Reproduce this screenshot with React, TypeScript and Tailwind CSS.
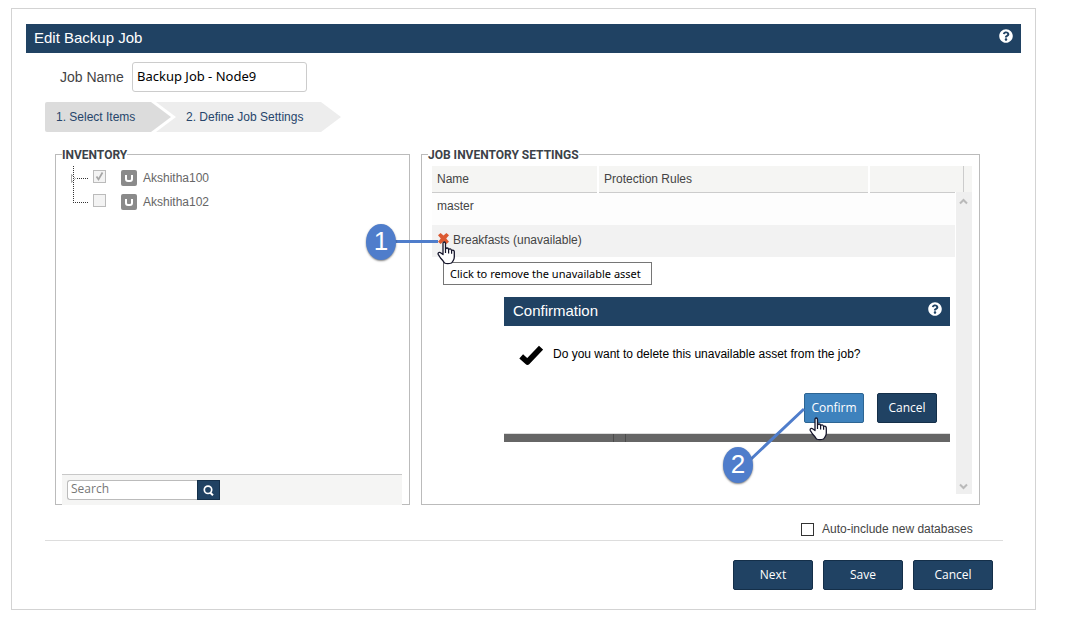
import type { ReactNode } from "react";
import { FaQuestionCircle } from "react-icons/fa";
import { clsx } from "clsx";

const servers = [
  { name: "Akshitha100", checked: true, expandable: true },
  { name: "Akshitha102", checked: false, expandable: false },
];

function TitleBar({ title, className }: { title: string; className?: string }) {
  return (
    <div
      className={clsx(
        "flex h-[29px] items-start justify-between bg-[#204263] pr-2 text-white",
        className
      )}
    >
      <h2 className="text-[15px] leading-[28px]">{title}</h2>
      <button type="button" aria-label="Help" className="mt-[5px]">
        <FaQuestionCircle className="size-[14px]" />
      </button>
    </div>
  );
}

function Button({
  children,
  className,
}: {
  children: ReactNode;
  className?: string;
}) {
  return (
    <button
      type="button"
      className={clsx(
        "h-[30px] rounded-[2px] border pb-px font-['Open_Sans',sans-serif] text-[12px] text-white",
        className
      )}
    >
      {children}
    </button>
  );
}

function Legend({ children }: { children: ReactNode }) {
  return (
    <legend className="pt-[2px] font-[Roboto,sans-serif] text-[12px] font-bold leading-[17px] text-[#3c4248]">
      {children}
    </legend>
  );
}

function TreeLines({ expandable }: { expandable: boolean }) {
  return (
    <svg width="20" height="24" viewBox="0 0 20 24" fill="none">
      {expandable && (
        <path d="M2.5 8.5L6.5 12.5L2.5 16.5Z" fill="#fff" stroke="#aaa" />
      )}
      <path
        d={expandable ? "M4.5 0V24" : "M4.5 0V12"}
        stroke="#333"
        strokeDasharray="1 1"
      />
      <path
        d={expandable ? "M8 12.5H20" : "M4 12.5H20"}
        stroke="#333"
        strokeDasharray="1 1"
      />
    </svg>
  );
}

function ServerIcon() {
  return (
    <svg width="16" height="16" viewBox="0 0 16 16" fill="none">
      <rect width="16" height="16" rx="2" fill="#8a8a8a" />
      <path
        d="M5 5V9Q5 11 7 11H9Q11 11 11 9V5"
        stroke="#fff"
        strokeWidth="2"
      />
    </svg>
  );
}

function HandCursor({ className }: { className: string }) {
  return (
    <svg
      width="19"
      height="24"
      viewBox="0 0 19 24"
      className={clsx("absolute", className)}
    >
      <path
        d="M6 13.5V2.5Q6 1 7.2 1T8.5 2.5V8Q9 6.9 10.2 7T11.6 8.6Q12.2 7.7 13.2 7.9T14.6 9.5Q15.4 8.8 16.4 9.3T17.3 11V16Q17.3 18.5 16 20Q15 21.5 14.5 22Q10.5 23.2 7.5 22Q6 19.5 3.5 17L1.2 13.3Q.8 12 1.8 11.5T4 12Z"
        fill="#fff"
        stroke="#14142a"
        strokeWidth="1.3"
        strokeLinejoin="round"
      />
      <path d="M8.5 8V12M11.6 8.8V12.4M14.6 9.7V12.8" stroke="#14142a" strokeWidth="1.2" />
    </svg>
  );
}

function Callout({ number, className }: { number: number; className: string }) {
  return (
    <div
      className={clsx(
        "absolute flex h-9 w-[30px] items-center justify-center rounded-[50%] bg-[#4f7dcb] pb-[2px] text-[26px] leading-none text-white shadow-[0_1px_2px_rgba(0,0,0,0.5)]",
        className
      )}
    >
      {number}
    </div>
  );
}

function Inventory() {
  return (
    <fieldset className="flex w-[355px] shrink-0 flex-col border border-[#bbb] pl-[6px] pr-[7px]">
      <Legend>INVENTORY</Legend>
      <ul className="flex-1 pl-[7px] pt-[2px]">
        {servers.map((server) => (
          <li key={server.name} className="flex h-6 items-start">
            <TreeLines expandable={server.expandable} />
            <label className="ml-1 flex text-[#666]">
              <span className="relative mt-1 size-[13px]">
                <input
                  type="checkbox"
                  disabled
                  defaultChecked={server.checked}
                  className="block size-[13px] appearance-none border border-[#bbb] bg-[#f3f3f3]"
                />
                {server.checked && (
                  <svg viewBox="0 0 13 13" className="absolute inset-0 size-[13px]" fill="none">
                    <path d="M3.5 6.5L5.5 9.5L9.5 2.5" stroke="#a5a5a5" strokeWidth="1.7" />
                  </svg>
                )}
              </span>
              <span className="ml-[15px] mt-1">
                <ServerIcon />
              </span>
              <span className="ml-[6px] leading-6">{server.name}</span>
            </label>
          </li>
        ))}
      </ul>
      <div className="-mb-px flex h-[31px] items-start border-t border-[#c8c8c8] bg-[#f5f5f4] pl-[5px] pt-[5px]">
        <input
          type="search"
          aria-label="Search"
          placeholder="Search"
          className="h-5 w-[130px] rounded-l-[3px] border border-r-0 border-[#bbb] bg-white px-[3px] pb-[3px] font-['Open_Sans',sans-serif] text-[12px] placeholder:text-[#777]"
        />
        <button
          type="button"
          aria-label="Run search"
          className="flex h-5 w-[23px] items-center justify-center border border-[#142f49] bg-[#204263]"
        >
          <svg width="11" height="11" viewBox="0 0 11 11" fill="none" stroke="#fff">
            <circle cx="5" cy="4.8" r="3.7" strokeWidth="1.7" />
            <path d="M7 7.5L10 10.3" strokeWidth="2" />
          </svg>
        </button>
      </div>
    </fieldset>
  );
}

function Confirmation() {
  return (
    <div
      role="dialog"
      aria-label="Confirmation"
      className="absolute left-[72px] right-[22px] top-[131px] bg-white"
    >
      <TitleBar title="Confirmation" className="pl-[9px]" />
      <div className="flex items-center pl-[15px] pt-[17px] text-black">
        <svg width="24" height="24" viewBox="0 0 24 24" fill="none">
          <path
            d="M2.2 13.4L8.4 19L22 4.7"
            stroke="currentColor"
            strokeWidth="5.6"
            strokeLinejoin="round"
          />
        </svg>
        <p className="ml-[10px] pb-[3px] text-[12px]">
          Do you want to delete this unavailable asset from the job?
        </p>
      </div>
      <div className="mt-[26px] flex justify-end gap-[13px] pb-[10px] pr-[13px]">
        <Button className="w-[60px] border-[#2d6593] bg-[#3e82bd]">Confirm</Button>
        <Button className="w-[60px] border-[#142f49] bg-[#204263]">Cancel</Button>
      </div>
      <div className="flex h-[9px] border-t border-[#ddd] bg-[#666]">
        <div className="ml-[109px] w-[13px] border-x border-[#4c4c4c]" />
      </div>
    </div>
  );
}

function JobInventorySettings() {
  return (
    <fieldset className="min-w-0 flex-1 border border-[#bbb] pb-[10px] pl-[6px] pr-[7px]">
      <Legend>JOB INVENTORY SETTINGS</Legend>
      <div className="relative ml-1 mt-[2px] h-[328px]">
        <table className="w-full table-fixed border-collapse text-left">
          <thead>
            <tr className="h-[26px] border-b border-[#ccc] bg-[#f5f5f3]">
              <th className="w-[166px] border-r-2 border-r-white pl-[5px] font-normal">Name</th>
              <th className="w-[271px] border-r-2 border-r-white pl-[5px] font-normal">
                Protection Rules
              </th>
              <th />
              <th className="w-[9px] border-l border-l-[#ccc]" />
            </tr>
          </thead>
          <tbody>
            <tr className="h-[33px] bg-[#fdfdfd]">
              <td className="pb-[6px] pl-[5px]">master</td>
              <td colSpan={3} />
            </tr>
            <tr className="h-8 bg-[#f2f2f2]">
              <td className="pb-[2px] pl-[6px]">
                <span className="flex items-center whitespace-nowrap">
                  <button type="button" aria-label="Remove unavailable asset" className="pb-1">
                    <svg width="11" height="11" viewBox="0 0 11 11">
                      <path
                        d="M0 2.2L2.6 0L5.5 2.6L8.4 0L11 2.2L8.2 5.5L11 8.8L8.4 11L5.5 8.4L2.6 11L0 8.8L2.8 5.5Z"
                        fill="#dc5a32"
                      />
                    </svg>
                  </button>
                  <span className="ml-1">Breakfasts (unavailable)</span>
                </span>
              </td>
              <td colSpan={3} />
            </tr>
          </tbody>
        </table>
        <div className="absolute bottom-0 right-0 top-[26px] flex w-[17px] flex-col items-center justify-between border-l border-white bg-[#efefef] pb-1 pr-px pt-[5px]">
          <svg width="9" height="8" viewBox="0 0 9 8" fill="none" stroke="#b9b9b9" strokeWidth="2">
            <path d="M1 6.5L4.5 3L8 6.5" />
          </svg>
          <svg width="9" height="8" viewBox="0 0 9 8" fill="none" stroke="#b9b9b9" strokeWidth="2">
            <path d="M1 2.5L4.5 6L8 2.5" />
          </svg>
        </div>
        <div
          role="tooltip"
          className="absolute left-[11px] top-[96px] h-[23px] w-[209px] whitespace-nowrap border border-[#767676] bg-white px-[6px] font-['Noto_Sans',sans-serif] text-[11px] leading-[21px] text-black"
        >
          Click to remove the unavailable asset
        </div>
        <Confirmation />
        <svg
          className="pointer-events-none absolute left-0 top-0 size-full overflow-visible"
          stroke="#4f7dcb"
          strokeWidth="3"
        >
          <path d="M-37 75.5H6M318 294L372 243" />
        </svg>
        <Callout number={1} className="left-[-66px] top-[58px]" />
        <Callout number={2} className="left-[291px] top-[281px]" />
        <HandCursor className="left-[5px] top-[75px]" />
        <HandCursor className="left-[377px] top-[251px]" />
      </div>
    </fieldset>
  );
}

export default function App() {
  return (
    <div className="pb-[26px] pl-[11px] pr-[33px] pt-2 font-['Liberation_Sans',Arial,sans-serif] text-[12px] text-[#444]">
      <form className="border border-[#d3d3d3] bg-white px-[14px] pb-[19px] pt-[15px]">
        <TitleBar title="Edit Backup Job" className="pl-2" />

        <div className="mt-[9px] flex items-center pl-[34px]">
          <label htmlFor="job-name" className="w-[72px] text-[14px]">
            Job Name
          </label>
          <input
            id="job-name"
            defaultValue="Backup Job - Node9"
            className="h-[30px] w-[175px] rounded-[3px] border border-[#ccc] px-1 pb-[3px] font-['Noto_Sans',sans-serif] text-[13px] text-black"
          />
        </div>

        <nav className="ml-[19px] mt-[10px] flex text-[#27456b]">
          <a
            href="#items"
            className="w-[126px] rounded-l-[2px] bg-[#dcdcdc] pl-[11px] leading-[30px] [clip-path:polygon(0_0,106px_0,100%_50%,106px_100%,0_100%)]"
          >
            1. Select Items
          </a>
          <a
            href="#settings"
            className="-ml-[15px] w-[185px] bg-[#ededed] pl-[30px] leading-[30px] [clip-path:polygon(0_0,165px_0,100%_50%,165px_100%,0_100%,20px_50%)]"
          >
            2. Define Job Settings
          </a>
        </nav>

        <div className="ml-[29px] mr-[41px] mt-[13px] flex gap-[11px]">
          <Inventory />
          <JobInventorySettings />
        </div>

        <div className="ml-[19px] mr-[18px] mt-[15px] flex justify-end border-b border-[#ddd] pb-[2px] pr-[25px]">
          <label className="flex items-center leading-[18px]">
            <input
              type="checkbox"
              className="mr-2 size-[13px] appearance-none border border-[#333] bg-white"
            />
            <span className="w-[156px]">Auto-include new databases</span>
          </label>
        </div>

        <div className="mr-7 mt-[19px] flex justify-end gap-[10px]">
          <Button className="w-20 border-[#142f49] bg-[#204263]">Next</Button>
          <Button className="w-20 border-[#142f49] bg-[#204263]">Save</Button>
          <Button className="w-20 border-[#142f49] bg-[#204263]">Cancel</Button>
        </div>
      </form>
    </div>
  );
}
